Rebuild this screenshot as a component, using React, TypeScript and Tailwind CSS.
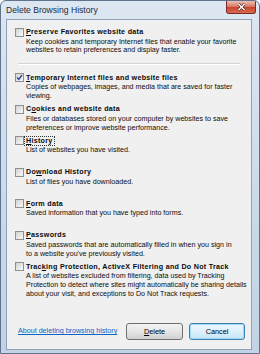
import React from 'react';

interface Item {
  title: React.ReactNode;
  lines: string[];
  checked?: boolean;
  focused?: boolean;
}

const u = (s: string) => <span className="underline">{s}</span>;

const ITEMS: Item[] = [
  {
    title: <>{u('T')}emporary Internet files and website files</>,
    lines: ['Copies of webpages, images, and media that are saved for faster', 'viewing.'],
    checked: true,
  },
  {
    title: <>C{u('o')}okies and website data</>,
    lines: ['Files or databases stored on your computer by websites to save', 'preferences or improve website performance.'],
  },
  {
    title: <>{u('H')}istory</>,
    lines: ['List of websites you have visited.'],
    focused: true,
  },
  {
    title: <>Do{u('w')}nload History</>,
    lines: ['List of files you have downloaded.'],
  },
  {
    title: <>{u('F')}orm data</>,
    lines: ['Saved information that you have typed into forms.'],
  },
  {
    title: <>{u('P')}asswords</>,
    lines: ['Saved passwords that are automatically filled in when you sign in', "to a website you've previously visited."],
  },
  {
    title: <>Trac{u('k')}ing Protection, ActiveX Filtering and Do Not Track</>,
    lines: [
      'A list of websites excluded from filtering, data used by Tracking',
      'Protection to detect where sites might automatically be sharing details',
      'about your visit, and exceptions to Do Not Track requests.',
    ],
  },
];

function CheckBox({ checked }: { checked?: boolean }) {
  return (
    <div className="w-[9px] h-[9px] mt-[0.5px] shrink-0 border border-[#8e8f8f] bg-gradient-to-br from-[#d2d2d2] to-[#fafafa] flex items-center justify-center">
      {checked && (
        <svg width="7" height="7" viewBox="0 0 7 7">
          <path d="M1 3.6 L2.8 5.4 L6 1" fill="none" stroke="#2a4d8a" strokeWidth="1.4" />
        </svg>
      )}
    </div>
  );
}

function Row({ item, fixed }: { item: Item; fixed?: boolean }) {
  return (
    <div className={`flex gap-[1px] ${fixed ? 'h-[31.5px]' : ''}`}>
      <CheckBox checked={item.checked} />
      <div className="flex flex-col">
        <div className="h-[10px] leading-[10px] font-bold tracking-[0.28px] whitespace-nowrap text-[#0a0a0a]">
          <span className={item.focused ? 'outline outline-1 outline-dotted outline-[#333] px-[1px]' : 'px-[1px]'}>
            {item.title}
          </span>
        </div>
        <div className="mt-[0.5px] pl-[1px] text-[#0d0d0d]">
          {item.lines.map((l) => (
            <div key={l} className="leading-[8.7px] whitespace-nowrap">{l}</div>
          ))}
        </div>
      </div>
    </div>
  );
}

export default function App() {
  return (
    <div
      className="w-[260px] h-[354px] flex flex-col rounded-t-[6px] border border-[#60738c] bg-gradient-to-b from-[#dde7f2] via-[#cddbeb] to-[#c2d3e6] overflow-hidden text-[7.15px] text-black"
      style={{ fontFamily: '"Liberation Sans", Arial, sans-serif' }}
    >
      {/* title bar */}
      <div className="h-[18px] shrink-0 flex items-start justify-between">
        <span className="ml-[5px] mt-[4px] text-[8.6px] leading-[10px] text-[#1e2b3a]">Delete Browsing History</span>
        <div className="relative mr-[3px] w-[30px] h-[13px] rounded-b-[3px] border border-t-0 border-[#7a2a22] bg-gradient-to-b from-[#e9a898] via-[#c8412b] to-[#d86a52] flex items-center justify-center overflow-hidden">
          <div className="absolute left-0 right-0 top-0 h-[6px] bg-white/25" />
          <svg className="relative" width="9" height="8" viewBox="0 0 9 8">
            <path d="M1.5 1 L7.5 7 M7.5 1 L1.5 7" stroke="#4a1c16" strokeWidth="2.6" />
            <path d="M1.5 1 L7.5 7 M7.5 1 L1.5 7" stroke="#ffffff" strokeWidth="1.5" />
          </svg>
        </div>
      </div>

      {/* client */}
      <div className="flex-1 ml-[5px] mr-[7px] mb-[3px] border border-[#8fa1b7] bg-[#f0f0f0] flex flex-col">
        <div className="pl-[8px] pt-[7px]">
          <Row
            item={{
              title: <>{u('P')}reserve Favorites website data</>,
              lines: [
                'Keep cookies and temporary Internet files that enable your favorite',
                'websites to retain preferences and display faster.',
              ],
            }}
          />
        </div>
        <div className="mx-[11px] mt-[8px] mb-[8px] h-[2px] border-t border-[#d5d5d5] border-b border-b-white" />
        <div className="pl-[8px] flex flex-col">
          {ITEMS.map((it, i) => (
            <Row key={i} item={it} fixed />
          ))}
        </div>
        <div className="flex-1" />
        <div className="flex items-center pl-[11px] pr-[6px] pb-[9px]">
          <a className="text-[#0b63c4] underline leading-[9px] whitespace-nowrap">About deleting browsing history</a>
          <div className="flex-1" />
          <button className="w-[57px] h-[17px] rounded-[3px] border border-[#707070] bg-gradient-to-b from-[#f3f3f3] via-[#e5e5e5] to-[#d0d0d0] text-[7.3px] leading-none">
            {u('D')}elete
          </button>
          <button className="ml-[6px] w-[56px] h-[17px] rounded-[3px] border border-[#3c7fb1] bg-gradient-to-b from-[#eef8fe] via-[#dcf0fc] to-[#c4e5f8] shadow-[inset_0_0_0_1px_#9fdaf9] text-[7.3px] leading-none">
            Cancel
          </button>
        </div>
      </div>
    </div>
  );
}
